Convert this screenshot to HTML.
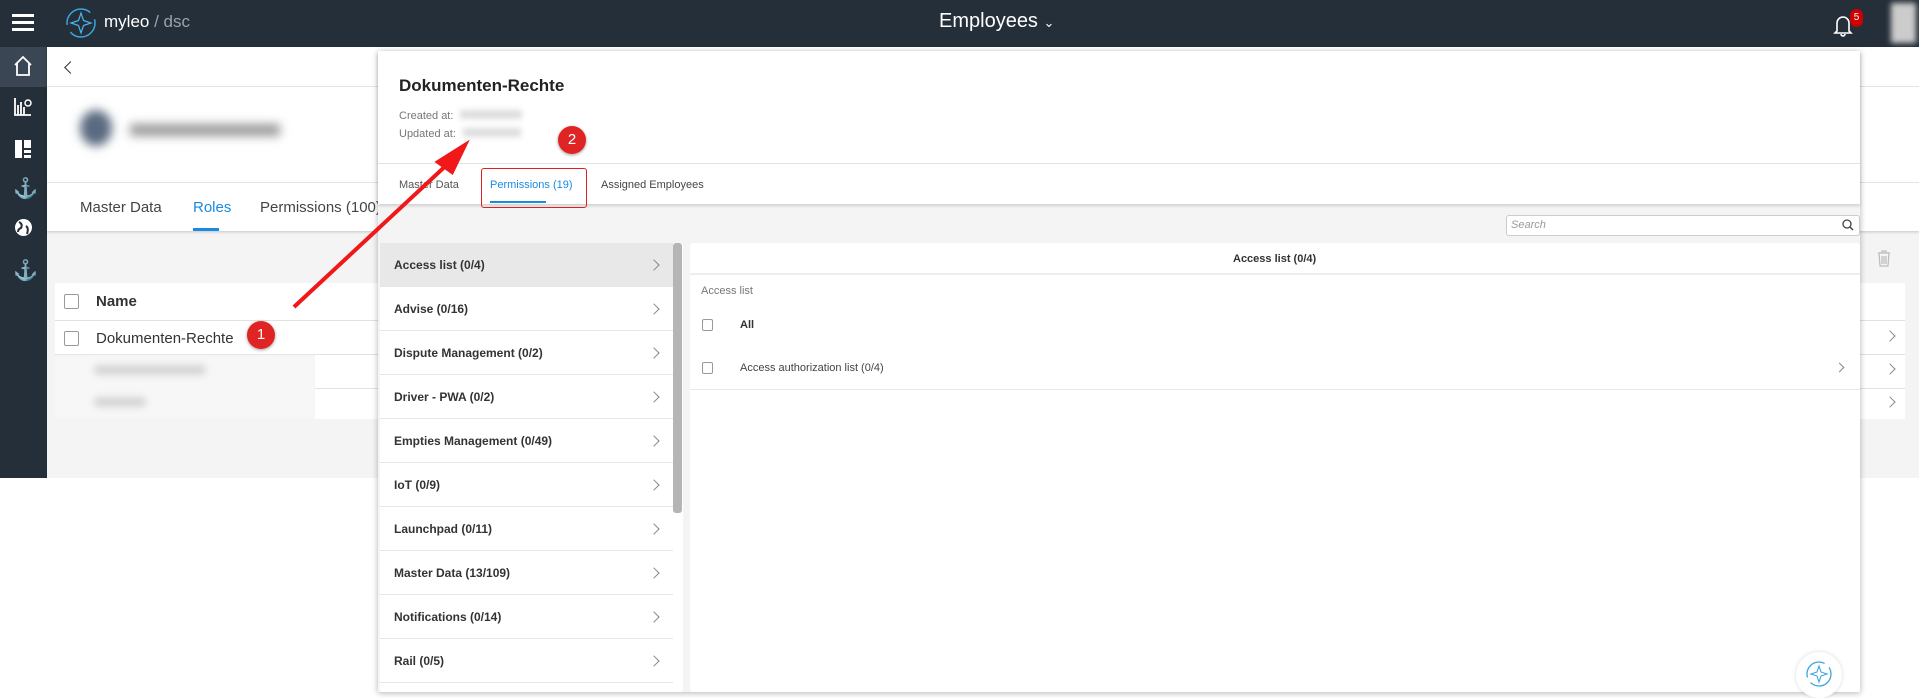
<!DOCTYPE html>
<html><head><meta charset="utf-8"><style>
*{box-sizing:border-box;margin:0;padding:0}
body{width:1919px;height:698px;overflow:hidden;background:#fff;font-family:"Liberation Sans",sans-serif;position:relative;color:#333}
.a{position:absolute}
.top{left:0;top:0;width:1919px;height:47px;background:#252f3a}
.side{left:0;top:47px;width:47px;height:431px;background:#252f3a}
.bg{left:47px;top:47px;width:1872px;height:431px;background:#f4f4f4}
.t{position:absolute;white-space:nowrap}
.chev{position:absolute;width:8px;height:8px;border-right:1.3px solid #888;border-top:1.3px solid #888;transform:rotate(45deg)}
.item{position:absolute;left:380px;width:293px;height:44px;border-bottom:1px solid #e6e6e6;background:#fff;font-size:12px;font-weight:bold;color:#333}
.item span{position:absolute;left:14px;top:15px}
.item .chev{left:270px;top:18px}
.cb{position:absolute;width:13px;height:13px;border:1.3px solid #999;border-radius:2px;background:#fff}
</style></head><body>
<div class="a top"></div>
<div class="a side"></div>
<div class="a bg"></div>
<!-- hamburger -->
<div class="a" style="left:12px;top:14px;width:22px;height:3px;background:#fff"></div>
<div class="a" style="left:12px;top:21px;width:22px;height:3px;background:#fff"></div>
<div class="a" style="left:12px;top:28px;width:22px;height:3px;background:#fff"></div>
<svg class="a" style="left:64px;top:6px" width="34" height="34" viewBox="0 0 34 34"><circle cx="17" cy="17" r="14" fill="none" stroke="#3aa6e0" stroke-width="1.5" stroke-dasharray="34 8"/><path d="M17 7 L19.5 14.5 L27 17 L19.5 19.5 L17 27 L14.5 19.5 L7 17 L14.5 14.5Z" fill="none" stroke="#4ab3f0" stroke-width="1.2"/></svg>
<div class="t" style="left:104px;top:12px;font-size:17px;color:#fff">myleo<span style="color:#9aa3ad"> / dsc</span></div>
<div class="t" style="left:939px;top:10px;font-size:20px;color:#fff">Employees <span style="font-size:13px">&#8964;</span></div>
<!-- bell -->
<svg class="a" style="left:1833px;top:13px" width="20" height="24" viewBox="0 0 20 24"><path d="M4 18 V10 a6 6 0 0 1 12 0 V18 L18 20 H2 Z M8 21 a2 2 0 0 0 4 0" fill="none" stroke="#fff" stroke-width="1.6"/></svg>
<div class="a" style="left:1850px;top:9px;width:13px;height:18px;border-radius:7px;background:#c00;color:#fff;font-size:10px;text-align:center;line-height:18px">5</div>
<div class="a" style="left:1891px;top:3px;width:25px;height:40px;background:#ccc;filter:blur(3px)"></div>
<!-- sidebar icons -->
<div class="a" style="left:0;top:47px;width:47px;height:40px;background:#3a4654"></div>
<svg class="a" style="left:13px;top:55px" width="20" height="22" viewBox="0 0 20 22"><path d="M2 10 L10 2 L18 10 M4 8 V20 H16 V8" fill="none" stroke="#fff" stroke-width="1.8"/></svg>
<svg class="a" style="left:14px;top:97px" width="18" height="20" viewBox="0 0 18 20"><path d="M1 1 V18 H17 M4 18 V8 M7 18 V5 M10 18 V10" stroke="#fff" stroke-width="1.8" fill="none"/><circle cx="14" cy="6" r="3" fill="none" stroke="#fff" stroke-width="1.5"/></svg>
<svg class="a" style="left:15px;top:140px" width="16" height="18" viewBox="0 0 16 18"><rect x="0" y="0" width="7" height="18" fill="#fff"/><rect x="9" y="0" width="7" height="8" fill="#fff"/><rect x="9" y="10" width="7" height="3" fill="#fff"/><rect x="9" y="15" width="7" height="3" fill="#fff"/></svg>
<div class="t" style="left:13px;top:176px;color:#fff;font-size:20px">&#9875;</div>
<svg class="a" style="left:14px;top:218px" width="19" height="19" viewBox="0 0 19 19"><circle cx="9.5" cy="9.5" r="8.5" fill="#fff"/><path d="M5 4 Q9 6 7 10 Q4 11 4 14 M12 8 Q15 10 13 16" stroke="#252f3a" stroke-width="2" fill="none"/></svg>
<div class="t" style="left:13px;top:258px;color:#fff;font-size:20px">&#9875;</div>
<!-- left card -->
<div class="a" style="left:47px;top:47px;width:1872px;height:184px;background:#fff;box-shadow:0 1px 3px rgba(0,0,0,.2)"></div>
<div class="a" style="left:47px;top:86px;width:1872px;height:1px;background:#e4e4e4"></div>
<div class="a" style="left:47px;top:182px;width:1872px;height:1px;background:#e4e4e4"></div>
<div class="chev" style="left:66px;top:63px;transform:rotate(-135deg);border-color:#333;width:9px;height:9px"></div>
<div class="a" style="left:80px;top:110px;width:32px;height:36px;border-radius:50%;background:#5a6a80;filter:blur(5px)"></div>
<div class="a" style="left:130px;top:124px;width:150px;height:12px;background:#999;filter:blur(5px)"></div>
<div class="t" style="left:80px;top:199px;font-size:15px;color:#444">Master Data</div>
<div class="t" style="left:193px;top:199px;font-size:15px;color:#1a8be0">Roles</div>
<div class="a" style="left:193px;top:228px;width:26px;height:3px;background:#1a8be0"></div>
<div class="t" style="left:260px;top:199px;font-size:15px;color:#444">Permissions (100)</div>
<!-- left table -->
<div class="a" style="left:55px;top:283px;width:1850px;height:38px;background:#fff;border-bottom:1px solid #e2e2e2"></div>
<div class="cb" style="left:64px;top:294px;width:15px;height:15px"></div>
<div class="t" style="left:96px;top:293px;font-size:15px;font-weight:bold;color:#333">Name</div>
<div class="a" style="left:55px;top:321px;width:1850px;height:34px;background:#fff;border-bottom:1px solid #e2e2e2"></div>
<div class="cb" style="left:64px;top:331px;width:15px;height:15px"></div>
<div class="t" style="left:96px;top:330px;font-size:15px;color:#333">Dokumenten-Rechte</div>
<div class="a" style="left:55px;top:356px;width:260px;height:62px;background:#f7f7f7;filter:blur(2px)"></div>
<div class="a" style="left:95px;top:366px;width:110px;height:8px;background:#ccc;filter:blur(4px)"></div>
<div class="a" style="left:95px;top:398px;width:50px;height:8px;background:#ccc;filter:blur(4px)"></div>
<div class="a" style="left:315px;top:355px;width:1590px;height:34px;background:#fff;border-bottom:1px solid #e2e2e2"></div>
<div class="a" style="left:315px;top:389px;width:1590px;height:30px;background:#fff"></div>
<svg class="a" style="left:1877px;top:250px" width="14" height="17" viewBox="0 0 14 17"><path d="M1 3 H13 M5 3 V1 H9 V3 M2 3 L3 16 H11 L12 3 M5 6 V14 M7 6 V14 M9 6 V14" stroke="#bbb" fill="none" stroke-width="1.2"/></svg>
<div class="chev" style="left:1886px;top:332px"></div>
<div class="chev" style="left:1886px;top:365px"></div>
<div class="chev" style="left:1886px;top:398px"></div>
<!-- modal -->
<div class="a" style="left:378px;top:51px;width:1482px;height:641px;background:#f4f4f4;box-shadow:0 1px 6px rgba(0,0,0,.3)"></div>
<div class="a" style="left:378px;top:51px;width:1482px;height:153px;background:#fff;box-shadow:0 2px 3px rgba(0,0,0,.15)"></div>
<div class="a" style="left:378px;top:163px;width:1482px;height:1px;background:#e2e2e2"></div>
<div class="t" style="left:399px;top:76px;font-size:17px;font-weight:bold;color:#222">Dokumenten-Rechte</div>
<div class="t" style="left:399px;top:110px;font-size:11px;color:#777">Created at:</div>
<div class="t" style="left:399px;top:128px;font-size:11px;color:#777">Updated at:</div>
<div class="a" style="left:460px;top:110px;width:62px;height:9px;background:#ddd;filter:blur(3px)"></div>
<div class="a" style="left:463px;top:128px;width:58px;height:9px;background:#ddd;filter:blur(3px)"></div>
<div class="t" style="left:399px;top:179px;font-size:11px;color:#555">Master Data</div>
<div class="t" style="left:490px;top:179px;font-size:11px;color:#1a8be0">Permissions (19)</div>
<div class="a" style="left:490px;top:201px;width:56px;height:2px;background:#1a8be0"></div>
<div class="t" style="left:601px;top:179px;font-size:11px;color:#444">Assigned Employees</div>
<div class="a" style="left:481px;top:168px;width:106px;height:40px;border:1.5px solid #e02020;border-radius:3px"></div>
<!-- search -->
<div class="a" style="left:1506px;top:215px;width:354px;height:21px;background:#fff;border:1px solid #ccc;border-radius:3px"></div>
<div class="t" style="left:1511px;top:219px;font-size:11px;font-style:italic;color:#999">Search</div>
<svg class="a" style="left:1842px;top:219px" width="12" height="12" viewBox="0 0 12 12"><circle cx="5" cy="5" r="4" fill="none" stroke="#444" stroke-width="1.3"/><path d="M8 8 L11 11" stroke="#444" stroke-width="1.5"/></svg>
<!-- left list -->
<div class="a" style="left:380px;top:243px;width:303px;height:449px;background:#fff;border-radius:3px"></div>
<div class="a" style="left:673px;top:243px;width:9px;height:270px;background:#b5b5b5;border-radius:3px"></div>
<div class="item" style="top:243px;background:#e8e8e8"><span>Access list (0/4)</span><div class="chev"></div></div>
<div class="item" style="top:287px"><span>Advise (0/16)</span><div class="chev"></div></div>
<div class="item" style="top:331px"><span>Dispute Management (0/2)</span><div class="chev"></div></div>
<div class="item" style="top:375px"><span>Driver - PWA (0/2)</span><div class="chev"></div></div>
<div class="item" style="top:419px"><span>Empties Management (0/49)</span><div class="chev"></div></div>
<div class="item" style="top:463px"><span>IoT (0/9)</span><div class="chev"></div></div>
<div class="item" style="top:507px"><span>Launchpad (0/11)</span><div class="chev"></div></div>
<div class="item" style="top:551px"><span>Master Data (13/109)</span><div class="chev"></div></div>
<div class="item" style="top:595px"><span>Notifications (0/14)</span><div class="chev"></div></div>
<div class="item" style="top:639px"><span>Rail (0/5)</span><div class="chev"></div></div>
<!-- right panel -->
<div class="a" style="left:690px;top:243px;width:1170px;height:449px;background:#fff;border-radius:3px"></div>
<div class="a" style="left:690px;top:273px;width:1170px;height:2px;background:#eee"></div>
<div class="t" style="left:1233px;top:253px;font-size:11px;font-weight:bold;color:#333">Access list (0/4)</div>
<div class="t" style="left:701px;top:285px;font-size:11px;color:#777">Access list</div>
<div class="cb" style="left:702px;top:319px;width:11px;height:12px"></div>
<div class="t" style="left:740px;top:319px;font-size:11px;font-weight:bold;color:#333">All</div>
<div class="cb" style="left:702px;top:362px;width:11px;height:12px"></div>
<div class="t" style="left:740px;top:362px;font-size:11px;color:#444">Access authorization list (0/4)</div>
<div class="chev" style="left:1836px;top:364px;width:7px;height:7px"></div>
<div class="a" style="left:690px;top:389px;width:1170px;height:1px;background:#e8e8e8"></div>
<!-- floating logo -->
<div class="a" style="left:1796px;top:652px;width:46px;height:46px;border-radius:50%;background:#fff;box-shadow:0 0 4px rgba(0,0,0,.15)"></div>
<svg class="a" style="left:1804px;top:658px" width="30" height="32" viewBox="0 0 30 32"><circle cx="15" cy="16" r="12" fill="none" stroke="#3aa6e0" stroke-width="1.3" stroke-dasharray="28 6"/><path d="M15 8 L17 14 L23 16 L17 18 L15 24 L13 18 L7 16 L13 14Z" fill="none" stroke="#3aa6e0" stroke-width="1.1"/></svg>
<!-- annotations -->
<svg class="a" style="left:0;top:0" width="1919" height="698"><path d="M294 307 L452 160" stroke="#f01818" stroke-width="4"/><path d="M465 145 L438 162 L452 172Z" fill="#f01818" stroke="#f01818" stroke-width="4"/></svg>
<div class="a" style="left:247px;top:321px;width:28px;height:28px;border-radius:50%;background:#e02424;color:#fff;font-size:15px;text-align:center;line-height:28px;box-shadow:0 1px 3px rgba(0,0,0,.4)">1</div>
<div class="a" style="left:558px;top:126px;width:28px;height:28px;border-radius:50%;background:#e02424;color:#fff;font-size:15px;text-align:center;line-height:28px;box-shadow:0 1px 3px rgba(0,0,0,.4)">2</div>
</body></html>
